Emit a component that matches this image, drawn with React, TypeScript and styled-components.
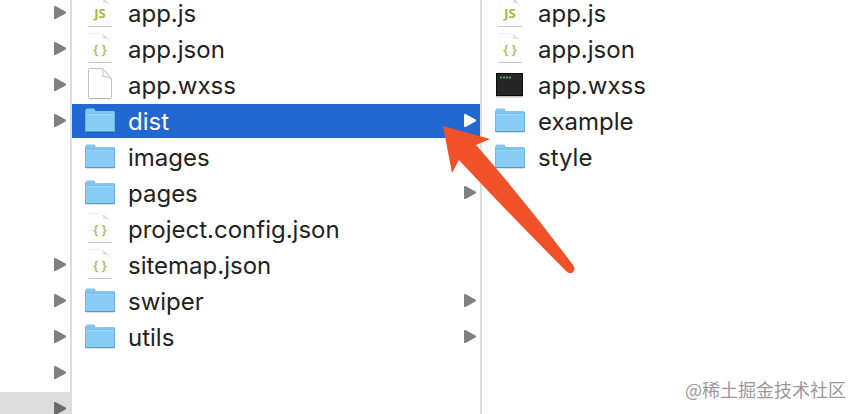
import React from "react";
import styled, { createGlobalStyle } from "styled-components";

const GlobalStyle = createGlobalStyle`
  * { box-sizing: border-box; }
  body {
    margin: 0;
    background: #fff;
    overflow: hidden;
    font-family: Inter, "Liberation Sans", "Noto Sans CJK SC", sans-serif;
  }
`;

const Browser = styled.main`
  position: relative;
  display: grid;
  grid-template-columns: 72px minmax(0, 410fr) minmax(0, 378fr);
  height: 100vh;
  overflow: hidden;
`;

const Column = styled.ul<{ $divided?: boolean }>`
  display: flex;
  flex-direction: column;
  gap: 2px;
  min-width: 0;
  margin: 0;
  margin-top: -4px;
  padding: 0;
  list-style: none;
  background: ${(p) =>
    p.$divided ? "linear-gradient(#dcdcdc, #dcdcdc) right / 2px 100% no-repeat" : "none"};
`;

const Item = styled.li<{ $divided?: boolean; $muted?: boolean }>`
  position: relative;
  flex: none;
  height: 34px;
  padding-right: ${(p) => (p.$divided ? "2px" : "0")};
  background: ${(p) => (p.$muted ? "#dcdcdc" : "transparent")};
`;

const Row = styled.button<{ $active?: boolean }>`
  display: flex;
  align-items: center;
  gap: 13px;
  width: 100%;
  height: 100%;
  margin: 0;
  padding: 0 4px 0 13px;
  border: 0;
  text-align: left;
  font: inherit;
  font-size: 24px;
  line-height: 26px;
  color: ${(p) => (p.$active ? "#fff" : "#222")};
  background: ${(p) => (p.$active ? "#2168d1" : "transparent")};
`;

const Name = styled.span`
  flex: 1;
  min-width: 0;
  padding-top: 2px;
  white-space: nowrap;
`;

const Icon = styled.svg`
  display: block;
  flex: none;
  overflow: visible;
`;

const Pointer = styled.svg`
  position: absolute;
  z-index: 1;
  top: 20px;
  right: -94px;
  pointer-events: none;
`;

const Watermark = styled.span`
  position: absolute;
  right: 14px;
  bottom: 12px;
  font-family: "Noto Sans CJK SC", sans-serif;
  font-size: 18px;
  line-height: 26px;
  color: #999;
`;

type Kind = "js" | "json" | "blank" | "exec" | "folder";
type Entry = { name: string; kind: Kind; open?: boolean; selected?: boolean };

const FolderIcon = () => (
  <Icon width="30" height="34" viewBox="0 0 30 34" aria-hidden="true">
    <path d="M0.5 28V6Q0.5 4.5 2 4.5H8.5Q9.5 4.5 10 5.5L10.5 7H28.5Q29.5 7 29.5 8V28Z" fill="#83c5ec" />
    <path d="M0.5 10H29.5V27.5H0.5Z" fill="#86ccf5" />
    <path d="M0.5 9.5H29.5" stroke="#78bde6" />
    <path d="M0.5 10.5H29.5" stroke="#9bd8fa" />
    <path d="M0.5 7V27.5M29.5 8V27.5" stroke="#70b6df" />
    <path d="M0 27.5H30" stroke="#5a9fc6" />
    <path d="M1 28.5H29" stroke="#000" strokeOpacity="0.12" />
  </Icon>
);

const CodeIcon = ({ label }: { label: string }) => (
  <Icon width="30" height="34" viewBox="0 0 30 34" aria-hidden="true">
    <path d="M3 30V1H15L26 11V30Z" fill="#fdfdfd" />
    <path d="M4 1.5H14" stroke="#ececec" />
    <path d="M14 1C17 1 18.5 3 18 6.5C21.5 6 24.5 7 25.5 11C25 7 19 2 14 1Z" fill="#d8d8d8" />
    <path d="M18 6.5C21 6 23.5 7 25 9.5L18 3.5Z" fill="#e6e6e6" />
    <path d="M3 30.5H27" stroke="#c8c8c8" />
    <text
      x="15"
      y="22"
      textAnchor="middle"
      fontFamily="Open Sans, sans-serif"
      fontSize="13"
      fontWeight={label === "JS" ? 700 : 600}
      fill="#a9b93f"
    >
      {label}
    </text>
  </Icon>
);

const BlankIcon = () => (
  <Icon width="30" height="34" viewBox="0 0 30 34" aria-hidden="true">
    <path d="M4.5 0.5H16Q18 0.5 20 3L24.5 8Q26.5 10 26.5 12V29.5Q26.5 30.5 25.5 30.5H4.5Q3.5 30.5 3.5 29.5V1.5Q3.5 0.5 4.5 0.5Z" fill="#fefefe" stroke="#c0c0c0" />
    <path d="M17 1C18.5 3 18 6 17.5 8.5C21 8.5 24.5 9 26 11.5" fill="#f4f4f4" stroke="#c8c8c8" />
    <path d="M4 30.5H26" stroke="#b0b0b0" />
  </Icon>
);

const ExecIcon = () => (
  <Icon width="30" height="34" viewBox="0 0 30 34" aria-hidden="true">
    <path d="M1 28.5H28" stroke="#c2c2c2" strokeWidth="2" />
    <rect x="1.5" y="5.5" width="26" height="22" fill="#252525" stroke="#0c0c0c" />
    <path d="M5 9.5H16" stroke="#5fa868" strokeWidth="2" strokeDasharray="2 1" />
  </Icon>
);

const FileIcon = ({ kind }: { kind: Kind }) => {
  if (kind === "folder") return <FolderIcon />;
  if (kind === "exec") return <ExecIcon />;
  if (kind === "blank") return <BlankIcon />;
  return <CodeIcon label={kind === "js" ? "JS" : "{ }"} />;
};

const Disclosure = ({ color }: { color: string }) => (
  <Icon width="12" height="16" viewBox="0 0 12 16" aria-hidden="true">
    <path d="M1 2L11 7.5L1 13Z" fill={color} stroke={color} strokeWidth="2" strokeLinejoin="round" />
  </Icon>
);

const parents: ("open" | "muted" | null)[] = [
  "open", "open", "open", "open", null, null, null, "open", "open", "open", "open", "muted",
];

const project: Entry[] = [
  { name: "app.js", kind: "js" },
  { name: "app.json", kind: "json" },
  { name: "app.wxss", kind: "blank" },
  { name: "dist", kind: "folder", open: true, selected: true },
  { name: "images", kind: "folder" },
  { name: "pages", kind: "folder", open: true },
  { name: "project.config.json", kind: "json" },
  { name: "sitemap.json", kind: "json" },
  { name: "swiper", kind: "folder", open: true },
  { name: "utils", kind: "folder", open: true },
];

const dist: Entry[] = [
  { name: "app.js", kind: "js" },
  { name: "app.json", kind: "json" },
  { name: "app.wxss", kind: "exec" },
  { name: "example", kind: "folder" },
  { name: "style", kind: "folder" },
];

const EntryRow = ({ entry, divided }: { entry: Entry; divided?: boolean }) => (
  <Item $divided={divided}>
    <Row type="button" $active={entry.selected}>
      <FileIcon kind={entry.kind} />
      <Name>{entry.name}</Name>
      {entry.open && <Disclosure color={entry.selected ? "#fff" : "#808080"} />}
    </Row>
    {entry.selected && (
      <Pointer width="136" height="152" viewBox="0 0 136 152" aria-hidden="true">
        <path
          d="M3 2L50 15L36 21Q86 78 133 141Q136 145 133 148Q130 151 126 147Q70 91 19 36L12 49Z"
          fill="#f15129"
        />
      </Pointer>
    )}
  </Item>
);

export default function App() {
  return (
    <>
      <GlobalStyle />
      <Browser>
        <Column $divided>
          {parents.map((state, i) => (
            <Item key={i} $divided $muted={state === "muted"}>
              {state && (
                <Row type="button" aria-label={`Folder ${i + 1}`}>
                  <Name />
                  <Disclosure color={state === "muted" ? "#6b6b6b" : "#808080"} />
                </Row>
              )}
            </Item>
          ))}
        </Column>
        <Column $divided>
          {project.map((entry) => (
            <EntryRow key={entry.name} entry={entry} divided />
          ))}
        </Column>
        <Column>
          {dist.map((entry) => (
            <EntryRow key={entry.name} entry={entry} />
          ))}
        </Column>
        <Watermark>@稀土掘金技术社区</Watermark>
      </Browser>
    </>
  );
}
